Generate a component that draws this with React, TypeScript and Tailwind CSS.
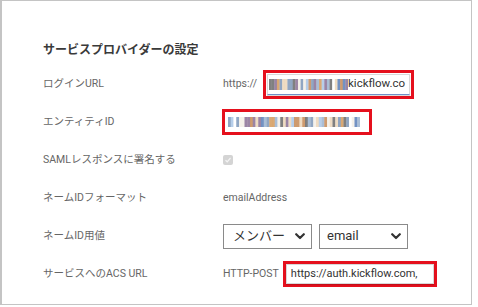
import React from "react";

const palette = ["#5b7fb8", "#d49a5c", "#4a4a4a", "#a9c6e6", "#ecd6b8", "#8a7095", "#ffffff", "#7d96b8", "#c58a56", "#9bb3cf", "#f3efe6", "#6a6a6a"];

function rnd(n: number) {
  const v = Math.sin(n * 12.9898 + 78.233) * 43758.5453;
  return v - Math.floor(v);
}

function Mosaic({ width, height, seed, count }: { width: number; height: number; seed: number; count: number }) {
  const rects: React.ReactNode[] = [];
  const bw = width / count;
  for (let i = 0; i < count; i++) {
    const c = palette[Math.floor(rnd(seed * 100 + i) * palette.length)];
    rects.push(<rect key={i} x={i * bw} y={0} width={bw + 0.2} height={height} fill={c} opacity={0.85} />);
  }
  return (
    <svg width={width} height={height} viewBox={`0 0 ${width} ${height}`}>
      {rects}
    </svg>
  );
}

function Chevron() {
  return (
    <svg width="10" height="7" viewBox="0 0 10 7">
      <path d="M1.2 1.2 L5 5 L8.8 1.2" stroke="#333" strokeWidth="2.2" fill="none" strokeLinecap="round" strokeLinejoin="round" />
    </svg>
  );
}

function Row({ label, children }: { label: string; children?: React.ReactNode }) {
  return (
    <div className="flex h-[38px] items-center">
      <div className="w-[180px] text-[10.5px] text-[#666]">{label}</div>
      <div className="flex items-center">{children}</div>
    </div>
  );
}

export default function App() {
  return (
    <div className="h-[307px] w-[478px] bg-white" style={{ fontFamily: "Roboto, 'Noto Sans CJK JP', sans-serif" }}>
      <div className="h-[305px] w-[472px] border border-l-2 border-[#c4c4c4] pl-[41px] pt-[41px]">
        <div className="flex h-[16px] items-center text-[12px] font-bold text-[#3a3a3a]">サービスプロバイダーの設定</div>
        <div className="mt-[7px] flex flex-col">
          <Row label="ログインURL">
            <span className="text-[10.5px] text-[#666]">https://</span>
            <div className="ml-[6px] border-[3px] border-[#e5101d] p-px">
              <div className="flex h-[21px] w-[143px] items-center border border-[#d8d8d8] border-b-[#6f8fc8] pl-[1px] shadow-[0_1px_1px_rgba(0,0,0,0.15)]">
                <Mosaic width={79} height={11} seed={7} count={30} />
                <span className="text-[11.5px] text-[#333]">kickflow.co</span>
              </div>
            </div>
          </Row>
          <Row label="エンティティID">
            <div className="-ml-[1px] flex h-[26px] w-[150px] items-center border-[3px] border-[#e5101d] pl-[3px]">
              <Mosaic width={132} height={10} seed={13} count={48} />
            </div>
          </Row>
          <Row label="SAMLレスポンスに署名する">
            <div className="flex h-[10px] w-[10px] items-center justify-center rounded-[2px] bg-[#d4d4d4]">
              <svg width="8" height="8" viewBox="0 0 8 8">
                <path d="M1.5 4.2 L3.2 5.8 L6.5 2" stroke="#f4f4f4" strokeWidth="1.2" fill="none" />
              </svg>
            </div>
          </Row>
          <Row label="ネームIDフォーマット">
            <span className="text-[10.5px] text-[#666]">emailAddress</span>
          </Row>
          <Row label="ネームID用値">
            <div className="flex gap-[7px]">
              <div className="flex h-[25px] w-[89px] items-center justify-between border border-[#8a8a8a] pl-[9px] pr-[6px] text-[13px] text-[#333]">
                <span>メンバー</span>
                <Chevron />
              </div>
              <div className="flex h-[25px] w-[89px] items-center justify-between border border-[#8a8a8a] pl-[7px] pr-[6px] text-[13px] text-[#333]">
                <span>email</span>
                <Chevron />
              </div>
            </div>
          </Row>
          <Row label="サービスへのACS URL">
            <span className="text-[10.5px] text-[#666]">HTTP-POST</span>
            <div className="ml-[4px] border-[3px] border-[#e5101d]">
              <div className="flex h-[20px] w-[148px] items-center overflow-hidden border border-[#d8d8d8] pl-[4px] shadow-[0_1px_1px_rgba(0,0,0,0.15)]">
                <span className="whitespace-nowrap text-[11px] text-[#333]">https://auth.kickflow.com,</span>
              </div>
            </div>
          </Row>
        </div>
      </div>
    </div>
  );
}
